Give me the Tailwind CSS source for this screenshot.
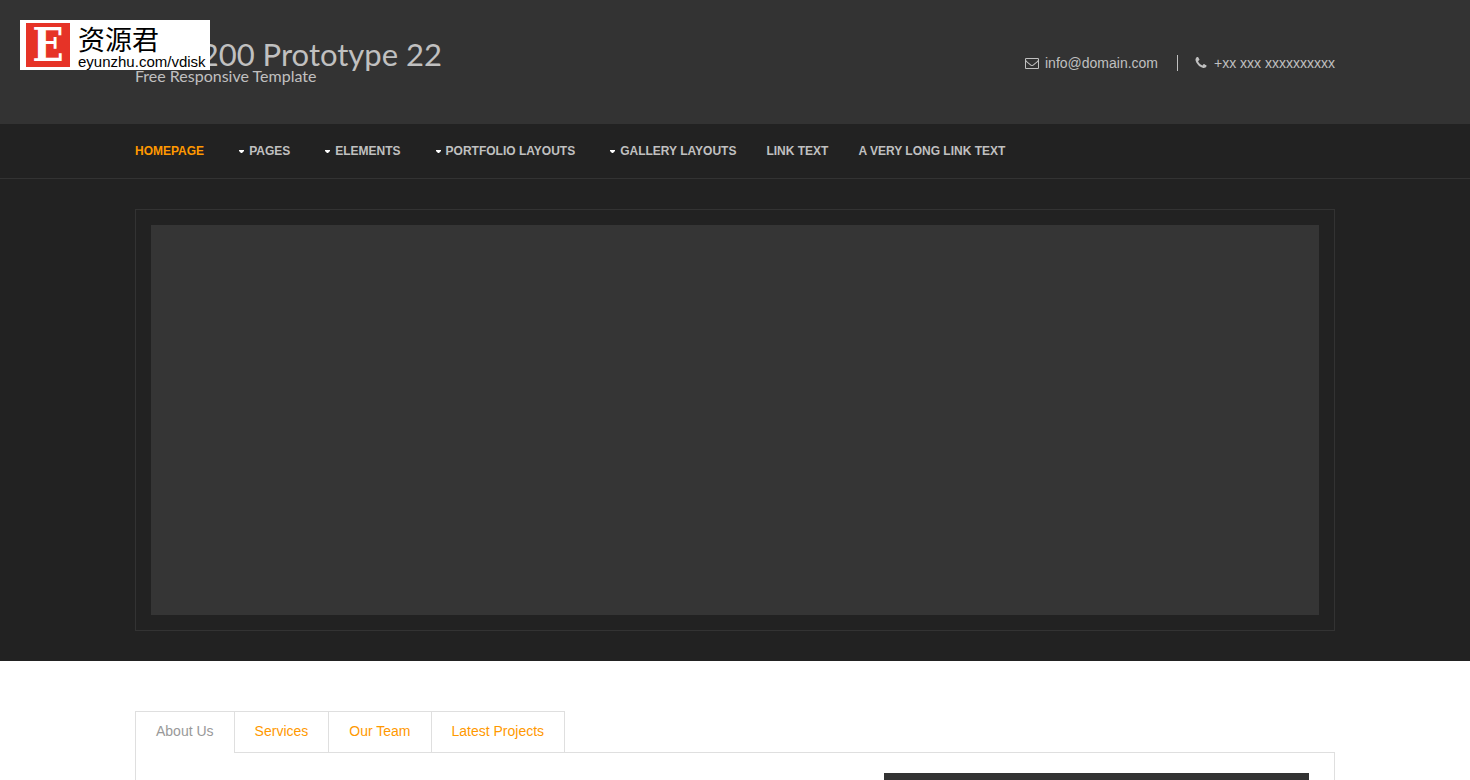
<!DOCTYPE html>
<html lang="en">
<head>
<meta charset="utf-8">
<meta name="viewport" content="width=device-width, initial-scale=1">
<title>RS-1200 Prototype 22</title>
<script src="https://cdn.jsdelivr.net/npm/@tailwindcss/browser@4"></script>
</head>
<body class="flex min-h-screen flex-col bg-white font-['Liberation_Sans',Arial,sans-serif] text-sm text-[#999999]">
<a href="#" class="absolute left-5 top-5 flex h-[50px] w-[190px] items-center bg-white pl-[6px] text-black">
  <span class="flex h-11 w-11 shrink-0 items-center justify-center bg-[#e63327] font-['DejaVu_Serif_Condensed','DejaVu_Serif',serif] text-[46px] leading-none font-bold text-white">E</span>
  <span class="flex flex-col pl-2">
    <span lang="zh" class="pt-1 font-['Noto_Sans_CJK_SC',sans-serif] text-[27px] leading-[30px] whitespace-nowrap">资源君</span>
    <span class="text-[15px] leading-4 whitespace-nowrap">eyunzhu.com/vdisk</span>
  </span>
</a>

<header class="bg-[#333333] text-[#c0c0c0]">
  <div class="mx-auto flex h-[124px] max-w-[1200px] items-center justify-between">
    <div class="font-[Lato,sans-serif]">
      <h1 class="text-[31px] leading-7"><a href="#">RS-1200 Prototype 22</a></h1>
      <p class="text-base leading-4">Free Responsive Template</p>
    </div>
    <ul class="flex items-center pt-0.5 leading-4">
      <li class="flex items-center border-r border-[#c0c0c0] pr-[19px]">
        <svg class="mr-[6px] h-[14px] w-[14px]" viewBox="0 0 1792 1792" fill="currentColor" aria-hidden="true"><path d="M1664 1504v-768q-32 36-69 66-268 206-426 338-51 43-83 67t-86.5 48.5-102.5 24.5h-2q-48 0-102.5-24.5t-86.5-48.5-83-67q-158-132-426-338-37-30-69-66v768q0 13 9.500 22.500t22.500 9.500h1472q13 0 22.500-9.500t9.500-22.500zm0-1051v-24.500l-.5-13-3-12.500-5.500-9-9-7.500-14-2.500h-1472q-13 0-22.500 9.500t-9.500 22.500q0 168 147 284 193 152 401 317 6 5 35 29.500t46 37.500 44.500 31.500 50.500 27.500 43 9h2q20 0 43-9t50.500-27.500 44.500-31.500 46-37.500 35-29.500q208-165 401-317 54-43 100.500-115.500t46.500-131.500zm128-37v1088q0 66-47 113t-113 47h-1472q-66 0-113-47t-47-113v-1088q0-66 47-113t113-47h1472q66 0 113 47t47 113z"/></svg>
        info@domain.com
      </li>
      <li class="flex items-center pl-4">
        <svg class="mr-[6px] h-[14px] w-[14px]" viewBox="0 0 1792 1792" fill="currentColor" aria-hidden="true"><path d="M1600 1240q0 27-10 70.500t-21 68.500q-21 50-122 106-94 51-186 51-27 0-53-3.500t-57.500-12.500-47-14.500-55.500-20.500-49-18q-98-35-175-83-127-79-264-216t-216-264q-48-77-83-175-3-9-18-49t-20.500-55.500-14.500-47-12.500-57.500-3.500-53q0-92 51-186 56-101 106-122 25-11 68.500-21t70.500-10q14 0 21 3 18 6 53 76 11 19 30 54t35 63.500 31 53.500q3 4 17.500 25t21.500 35.500 7 28.500q0 20-28.500 50t-62 55-62 53-28.500 46q0 9 5 22.500t8.500 20.500 14 24 11.500 19q76 137 174 235t235 174q2 1 19 11.500t24 14 20.500 8.500 22.500 5q18 0 46-28.500t53-62 55-62 50-28.500q14 0 28.500 7t35.500 21.500 25 17.500q25 15 53.500 31t63.500 35 54 30q70 35 76 53 3 7 3 21z"/></svg>
        +xx xxx xxxxxxxxxx
      </li>
    </ul>
  </div>
</header>

<nav class="border-b border-[#333333] bg-[#222222] text-xs font-bold uppercase text-[#c0c0c0]">
  <ul class="mx-auto flex h-[54px] max-w-[1200px] items-center gap-[30px]">
    <li><a href="#" class="text-[#ff9900]">Homepage</a></li>
    <li><a href="#" class="flex items-center gap-[5px] pl-[5px]"><svg class="h-[3px] w-[5px]" viewBox="0 0 5 3" fill="#fff" aria-hidden="true"><path d="M0 0h5v1L3 3H2L0 1z"/></svg>Pages</a></li>
    <li><a href="#" class="flex items-center gap-[5px] pl-[5px]"><svg class="h-[3px] w-[5px]" viewBox="0 0 5 3" fill="#fff" aria-hidden="true"><path d="M0 0h5v1L3 3H2L0 1z"/></svg>Elements</a></li>
    <li><a href="#" class="flex items-center gap-[5px] pl-[5px]"><svg class="h-[3px] w-[5px]" viewBox="0 0 5 3" fill="#fff" aria-hidden="true"><path d="M0 0h5v1L3 3H2L0 1z"/></svg>Portfolio Layouts</a></li>
    <li><a href="#" class="flex items-center gap-[5px] pl-[5px]"><svg class="h-[3px] w-[5px]" viewBox="0 0 5 3" fill="#fff" aria-hidden="true"><path d="M0 0h5v1L3 3H2L0 1z"/></svg>Gallery Layouts</a></li>
    <li><a href="#">Link Text</a></li>
    <li><a href="#">A Very Long Link Text</a></li>
  </ul>
</nav>

<section class="bg-[#222222] py-[30px]">
  <div class="mx-auto max-w-[1200px] border border-[#333333] p-[15px]">
    <div class="aspect-[1168/390] bg-[#353535]"></div>
  </div>
</section>

<main class="mx-auto flex w-full max-w-[1200px] grow flex-col pt-[50px]">
  <div role="tablist" class="flex leading-[38px]">
    <button role="tab" aria-selected="true" class="border border-b-0 border-[#dfdfdf] px-5 pb-[3px]">About Us</button>
    <button role="tab" aria-selected="false" class="border-y border-r border-[#dfdfdf] px-5 pb-0.5 text-[#ff9900]">Services</button>
    <button role="tab" aria-selected="false" class="border-y border-r border-[#dfdfdf] px-5 pb-0.5 text-[#ff9900]">Our Team</button>
    <button role="tab" aria-selected="false" class="border-y border-r border-[#dfdfdf] px-5 pb-0.5 text-[#ff9900]">Latest Projects</button>
    <span class="grow border-b border-[#dfdfdf]"></span>
  </div>
  <div role="tabpanel" class="flex grow justify-end border-x border-[#dfdfdf] pt-5 pr-[25px]">
    <div class="w-[425px] bg-[#333333]"></div>
  </div>
</main>
</body>
</html>
